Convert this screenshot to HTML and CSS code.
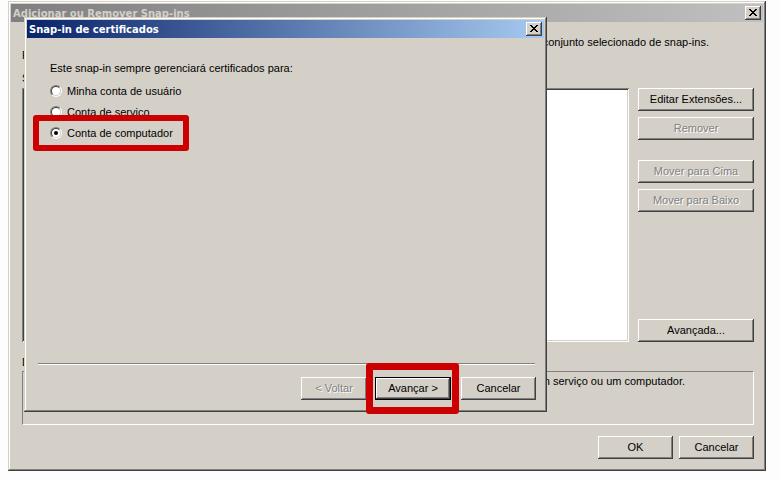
FILE: index.html
```html
<!DOCTYPE html>
<html lang="pt-BR">
<head>
<meta charset="utf-8">
<title>Snap-in de certificados</title>
<link rel="stylesheet" href="styles.css">
</head>
<body>
<div class="window outer">
  <div class="titlebar inactive">
    <span class="title">Adicionar ou Remover Snap-ins</span>
    <span class="tbtn"><svg width="8" height="7" viewBox="0 0 8 7" shape-rendering="crispEdges"><path d="M0 0h2v1h-2z M6 0h2v1h-2z M1 1h2v1h-2z M5 1h2v1h-2z M2 2h4v1h-4z M3 3h2v1h-2z M2 4h4v1h-4z M1 5h2v1h-2z M5 5h2v1h-2z M0 6h2v1h-2z M6 6h2v1h-2z" fill="#000"/></svg></span>
  </div>
  <div class="outer-body">
    <div class="intro1"><span>Você pode selecionar snap-ins para este console entre os disponíveis no computador e configurar o conjunto selecionado de snap-ins.</span></div>
    <div class="intro2">Para snap-ins extensíveis, você pode configurar quais extensões serão habilitadas.</div>
    <div class="lists">
      <div class="lbl">Snap-ins disponíveis:</div>
      <div></div>
      <div class="lbl">Snap-ins selecionados:</div>
      <div></div>
      <div class="listbox"></div>
      <div class="addcol"><button class="btn">Adicionar &gt;</button></div>
      <div class="listbox"></div>
      <div class="btncol">
        <button class="btn wide">Editar Extensões...</button>
        <button class="btn wide dis gap6">Remover</button>
        <button class="btn wide dis gap20">Mover para Cima</button>
        <button class="btn wide dis gap6">Mover para Baixo</button>
        <button class="btn wide push">Avançada...</button>
      </div>
    </div>
    <div class="desc-lbl">Descrição:</div>
    <div class="desc-box"><div class="desc-text"><span>O snap-in Certificados permite procurar o conteúdo dos repositórios de certificados para você mesmo, um serviço ou um computador.</span></div></div>
    <div class="footer">
      <button class="btn std">OK</button>
      <button class="btn std">Cancelar</button>
    </div>
  </div>
</div>

<div class="window dialog">
  <div class="titlebar active">
    <span class="title">Snap-in de certificados</span>
    <span class="tbtn"><svg width="8" height="7" viewBox="0 0 8 7" shape-rendering="crispEdges"><path d="M0 0h2v1h-2z M6 0h2v1h-2z M1 1h2v1h-2z M5 1h2v1h-2z M2 2h4v1h-4z M3 3h2v1h-2z M2 4h4v1h-4z M1 5h2v1h-2z M5 5h2v1h-2z M0 6h2v1h-2z M6 6h2v1h-2z" fill="#000"/></svg></span>
  </div>
  <div class="dlg-body">
    <div class="prompt">Este snap-in sempre gerenciará certificados para:</div>
    <div class="radios">
      <div class="radio-row"><span class="radio"></span><span>Minha conta de usuário</span></div>
      <div class="radio-row"><span class="radio"></span><span>Conta de serviço</span></div>
      <div class="radio-row"><span class="radio checked"></span><span>Conta de computador</span></div>
    </div>
    <div class="spacer"></div>
    <div class="sep"></div>
    <div class="dlg-btns">
      <button class="btn dis back">&lt; Voltar</button>
      <button class="btn def next">Avançar &gt;</button>
      <button class="btn std">Cancelar</button>
    </div>
  </div>
</div>

<div class="hl hl-radio"></div>
<div class="hl hl-next"></div>
</body>
</html>
```

FILE: styles.css
```css
* { box-sizing: border-box; }
html, body { margin: 0; padding: 0; }
body {
  width: 780px;
  height: 481px;
  position: relative;
  overflow: hidden;
  background: #fdfdfd;
  font-family: "Liberation Sans", Arial, sans-serif;
  font-size: 11px;
  color: #000;
}

/* windows */
.window {
  position: absolute;
  background: #d4d0c8;
  padding: 3px;
  display: flex;
  flex-direction: column;
  box-shadow: inset -1px -1px #404040, inset 1px 1px #d4d0c8,
              inset -2px -2px #808080, inset 2px 2px #fff;
}
.outer { left: 8px; top: 1px; width: 758px; height: 470px; }
.dialog { left: 24px; top: 17px; width: 523px; height: 395px; }

.titlebar {
  flex: none;
  height: 18px;
  display: flex;
  align-items: center;
  padding: 0 2px 0 2px;
}
.titlebar.inactive { background: linear-gradient(to right, #808080, #c0c0c0); color: #d4d0c8; }
.titlebar.active { background: linear-gradient(to right, #0a246a, #a6caf0); color: #fff; }
.title {
  flex: 1;
  white-space: nowrap;
  font-family: "DejaVu Sans", Verdana, sans-serif;
  font-weight: bold;
  font-size: 10px;
}
.tbtn {
  width: 16px;
  height: 14px;
  background: #d4d0c8;
  display: flex;
  align-items: center;
  justify-content: center;
  padding: 0 1px 1px 0;
  box-shadow: inset -1px -1px #404040, inset 1px 1px #fff,
              inset -2px -2px #808080, inset 2px 2px #d4d0c8;
}
.tbtn svg { display: block; }

/* buttons */
.btn {
  font: inherit;
  line-height: 13px;
  color: #000;
  background: #d4d0c8;
  border: 0;
  margin: 0;
  padding: 0;
  height: 23px;
  box-shadow: inset -1px -1px #404040, inset 1px 1px #fff,
              inset -2px -2px #808080, inset 2px 2px #d4d0c8;
}
.btn.dis { color: #808080; text-shadow: 1px 1px #fff; }
.btn.std { width: 75px; }
.btn.wide { width: 116px; }
.btn.def { border: 1px solid #000; }

/* outer body */
.outer-body {
  flex: 1;
  display: flex;
  flex-direction: column;
  padding: 14px 9px 0 11px;
}
.intro1 {
  display: flex;
  justify-content: flex-end;
  white-space: nowrap;
  line-height: 13px;
  padding-right: 45px;
}
.intro2 { line-height: 13px; white-space: nowrap; }

.lists {
  display: grid;
  grid-template-columns: 230px 84px 1fr 116px;
  grid-template-rows: auto 254px;
  column-gap: 9px;
  row-gap: 3px;
  margin-top: 10px;
}
.lbl { line-height: 13px; white-space: nowrap; }
.listbox {
  background: #fff;
  box-shadow: inset 1px 1px #808080, inset -1px -1px #fff,
              inset 2px 2px #404040, inset -2px -2px #d4d0c8;
}
.addcol { display: flex; align-items: center; justify-content: center; }
.addcol .btn { width: 75px; }
.btncol { display: flex; flex-direction: column; }
.gap6 { margin-top: 6px; }
.gap20 { margin-top: 20px; }
.push { margin-top: auto; }

.desc-lbl { margin-top: 14px; line-height: 13px; }
.desc-box {
  margin-top: 2px;
  height: 54px;
  border: 1px solid;
  border-color: #808080 #fff #fff #808080;
  padding: 3px 0 0 0;
}
.desc-text {
  display: flex;
  justify-content: flex-end;
  white-space: nowrap;
  line-height: 13px;
  padding-right: 68px;
}
.footer {
  margin-top: 11px;
  display: flex;
  justify-content: flex-end;
  gap: 6px;
}

/* dialog body */
.dlg-body {
  flex: 1;
  display: flex;
  flex-direction: column;
  padding: 24px 8px 9px 23px;
}
.prompt { line-height: 13px; }
.radios { margin-top: 5px; }
.radio-row {
  height: 21px;
  display: flex;
  align-items: center;
  gap: 5px;
}
.radio {
  position: relative;
  width: 12px;
  height: 12px;
  border-radius: 50%;
  border: 1px solid;
  border-color: #808080 #fff #fff #808080;
}
.radio::before {
  content: "";
  position: absolute;
  inset: 0;
  border-radius: 50%;
  border: 1px solid;
  border-color: #404040 #d4d0c8 #d4d0c8 #404040;
  background: #fff;
}
.radio.checked::after {
  content: "";
  position: absolute;
  left: 3px;
  top: 3px;
  width: 4px;
  height: 4px;
  border-radius: 50%;
  background: #000;
}
.spacer { flex: 1; }
.sep {
  height: 2px;
  border-top: 1px solid #808080;
  border-bottom: 1px solid #fff;
  margin: 0 1px 0 -12px;
}
.dlg-btns {
  margin-top: 12px;
  display: flex;
  justify-content: flex-end;
}
.back { width: 66px; margin-right: 8px; }
.next { width: 76px; margin-right: 10px; }

/* red highlight annotations */
.hl {
  position: absolute;
  border: 6px solid #cc0000;
  border-radius: 3px;
}
.hl-radio { left: 33px; top: 115px; width: 156px; height: 36px; }
.hl-next { left: 366px; top: 363px; width: 93px; height: 51px; border-width: 7px; }
```
